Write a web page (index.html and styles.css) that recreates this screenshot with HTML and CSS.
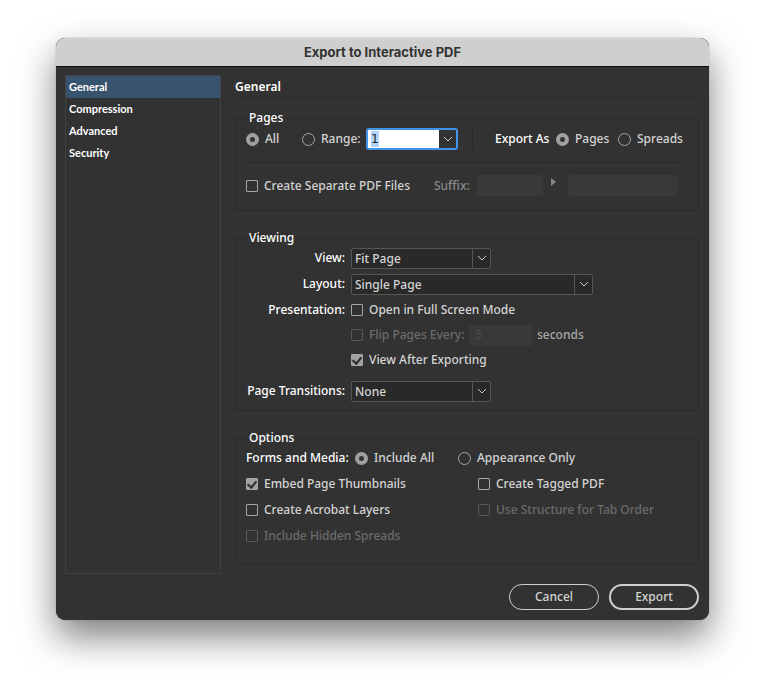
FILE: index.html
```
<!DOCTYPE html>
<html lang="en">

<head>
    <meta charset="utf-8">
    <title>Export to Interactive PDF</title>
    <link rel="stylesheet" href="styles.css">
</head>

<body>
    <form class="dialog" onsubmit="return false">
        <h1 class="titlebar">Export to Interactive PDF</h1>

        <div class="content">
            <nav class="sidebar">
                <a href="#general" class="active">General</a>
                <a href="#compression">Compression</a>
                <a href="#advanced">Advanced</a>
                <a href="#security">Security</a>
            </nav>

            <main id="general">
                <h2>General</h2>

                <fieldset class="pages">
                    <legend>Pages</legend>
                    <div class="row range-row">
                        <label class="all"><input type="radio" name="pages" checked>All</label>
                        <label class="range"><input type="radio" name="pages">Range:</label>
                        <div class="combo">
                            <input type="text" id="range" value="1" aria-label="Page range">
                            <button type="button" aria-label="Choose range"><svg viewBox="0 0 10 6"><path d="M1 1l4 4 4-4" /></svg></button>
                        </div>
                        <div class="export-as">
                            <span class="name">Export As</span>
                            <label class="as-pages"><input type="radio" name="as" checked>Pages</label>
                            <label><input type="radio" name="as">Spreads</label>
                        </div>
                    </div>
                    <div class="row suffix-row">
                        <label class="separate"><input type="checkbox">Create Separate PDF Files</label>
                        <label for="suffix" class="suffix-label">Suffix:</label>
                        <input type="text" id="suffix" class="field" disabled>
                        <svg class="arrow" viewBox="0 0 5 8"><path d="M0 0l5 4-5 4z" /></svg>
                        <input type="text" class="field preview" aria-label="Suffix preview" disabled>
                    </div>
                </fieldset>

                <fieldset class="viewing">
                    <legend>Viewing</legend>
                    <div class="grid">
                        <label for="view" class="name">View:</label>
                        <div class="select">
                            <select id="view"><option>Fit Page</option></select>
                            <svg viewBox="0 0 10 6"><path d="M1 1l4 4 4-4" /></svg>
                        </div>
                        <label for="layout" class="name">Layout:</label>
                        <div class="select wide">
                            <select id="layout"><option>Single Page</option></select>
                            <svg viewBox="0 0 10 6"><path d="M1 1l4 4 4-4" /></svg>
                        </div>
                        <span class="name">Presentation:</span>
                        <div class="stack">
                            <label><input type="checkbox">Open in Full Screen Mode</label>
                            <div class="row flip">
                                <label class="off"><input type="checkbox" disabled>Flip Pages Every:</label>
                                <input type="text" id="seconds" class="field" value="5" disabled>
                                <label for="seconds" class="seconds">seconds</label>
                            </div>
                            <label><input type="checkbox" checked>View After Exporting</label>
                        </div>
                        <label for="transitions" class="name">Page Transitions:</label>
                        <div class="select">
                            <select id="transitions"><option>None</option></select>
                            <svg viewBox="0 0 10 6"><path d="M1 1l4 4 4-4" /></svg>
                        </div>
                    </div>
                </fieldset>

                <fieldset class="options">
                    <legend>Options</legend>
                    <div class="row media">
                        <span class="name">Forms and Media:</span>
                        <label class="include"><input type="radio" name="media" checked>Include All</label>
                        <label><input type="radio" name="media">Appearance Only</label>
                    </div>
                    <div class="checks">
                        <label><input type="checkbox" checked>Embed Page Thumbnails</label>
                        <label><input type="checkbox">Create Tagged PDF</label>
                        <label><input type="checkbox">Create Acrobat Layers</label>
                        <label class="off"><input type="checkbox" disabled>Use Structure for Tab Order</label>
                        <label class="off"><input type="checkbox" disabled>Include Hidden Spreads</label>
                    </div>
                </fieldset>
            </main>
        </div>

        <footer>
            <button type="button">Cancel</button>
            <button type="submit" class="primary">Export</button>
        </footer>
    </form>

    <script>
        document.getElementById("range").select();
    </script>
</body>

</html>
```
FILE: styles.css
```
* {
    box-sizing: border-box;
}

body {
    margin: 0;
    padding: 38px 56px 74px;
    background: #fff;
    font-family: "Noto Sans", sans-serif;
    font-size: 12px;
    font-weight: 500;
    line-height: 16px;
    color: #d4d4d4;
}

input,
select,
button {
    margin: 0;
    font: inherit;
    color: inherit;
}

.dialog {
    position: relative;
    z-index: 0;
    border-radius: 9px;
    background: #323232;
    box-shadow: 0 0 1px 0 rgba(0, 0, 0, 0.6), 0 17px 36px 0 rgba(0, 0, 0, 0.5);
}

.titlebar {
    margin: 0;
    border-bottom: 1px solid #0c0c0c;
    border-radius: 9px 9px 0 0;
    background: #cfcfcf;
    color: #333;
    font-family: Inter, sans-serif;
    font-size: 13px;
    font-weight: 700;
    line-height: 28px;
    text-align: center;
}

.content {
    display: flex;
    gap: 14px;
    padding: 8px 10px 0 9px;
}

.sidebar {
    flex: none;
    width: 156px;
    border: 1px solid #414141;
}

.sidebar a {
    display: block;
    padding: 0 3px;
    color: #fff;
    font-family: Lato, sans-serif;
    font-size: 11px;
    font-weight: 700;
    line-height: 22px;
    text-decoration: none;
}

.sidebar .active {
    background: #38536e;
}

main {
    flex: 1;
    padding-bottom: 10px;
}

h2 {
    margin: 0 0 12px;
    padding-top: 2px;
    border-bottom: 1px solid #292929;
    color: #fff;
    font-size: 12px;
    font-weight: 600;
    line-height: 20px;
}

fieldset {
    min-width: 0;
    margin: 0 0 19px;
    padding: 0 10px;
    border: 1px solid #292929;
    border-radius: 2px;
}

fieldset:last-child {
    margin-bottom: 0;
}

legend {
    padding: 0 3px;
    color: #fff;
}

.name {
    color: #fff;
}

.row {
    display: flex;
    align-items: center;
}

label {
    display: flex;
    align-items: center;
    white-space: nowrap;
}

.off {
    color: #6b6b6b;
}

/* radios and tick boxes */
input[type="radio"],
input[type="checkbox"] {
    flex: none;
    appearance: none;
    width: 13px;
    height: 13px;
    margin-right: 6px;
    border: 1px solid #a6a6a6;
    border-radius: 50%;
}

input[type="radio"]:checked {
    border: 4px solid #a0a0a0;
}

input[type="checkbox"] {
    display: grid;
    place-items: center;
    width: 12px;
    height: 12px;
    border-radius: 1px;
}

input[type="checkbox"]:checked {
    background: #a0a0a0;
}

input[type="checkbox"]:checked::before {
    content: "";
    width: 4px;
    height: 7px;
    margin-bottom: 2px;
    border: solid #2b2b2b;
    border-width: 0 2px 2px 0;
    transform: rotate(40deg);
}

input[type="checkbox"]:disabled {
    border-color: #565656;
}

.field {
    width: 66px;
    height: 21px;
    padding: 0 6px;
    border: 0;
    border-radius: 2px;
    background: #393939;
    color: #4a4a4a;
}

svg {
    fill: none;
    stroke: #c8c8c8;
}

/* Pages */
.pages {
    padding-bottom: 14px;
}

.range-row {
    height: 26px;
}

.all {
    width: 56px;
}

.range {
    width: 64px;
}

.combo {
    display: flex;
    width: 92px;
    height: 22px;
    border: 2px solid #3f94ea;
    border-radius: 3px;
    background: #323232;
}

.combo input {
    flex: 1;
    min-width: 0;
    padding: 0 3px;
    border: 0;
    outline: 0;
    background: #fff;
    color: #222;
    font-family: "DejaVu Sans", sans-serif;
}

.combo input::selection {
    background: #b2d5fd;
    color: #222;
}

.combo button {
    display: grid;
    place-items: center;
    width: 17px;
    padding: 0;
    border: 0;
    background: none;
}

.combo svg {
    width: 10px;
    height: 6px;
}

.export-as {
    display: flex;
    align-items: center;
    margin-left: 14px;
    padding-left: 22px;
    border-left: 1px solid #292929;
    height: 24px;
}

.export-as .name {
    width: 61px;
    white-space: nowrap;
}

.as-pages {
    width: 62px;
}

.suffix-row {
    margin: 10px 8px 0 0;
    padding-top: 12px;
    border-top: 1px solid #292929;
}

.separate {
    width: 188px;
}

.suffix-label {
    width: 43px;
    color: #8a8a8a;
}

.arrow {
    width: 5px;
    height: 8px;
    margin: 0 12px 8px 8px;
    fill: #858585;
    stroke: none;
}

.preview {
    width: 110px;
}

/* Viewing */
.viewing {
    padding-bottom: 7px;
}

.grid {
    display: grid;
    grid-template-columns: 99px 1fr;
    gap: 2px 6px;
    line-height: 24px;
}

.grid > .name {
    justify-content: flex-end;
    text-align: right;
}

.select {
    display: grid;
    align-items: center;
    width: 140px;
    height: 24px;
}

.select.wide {
    width: 242px;
}

.select select,
.select svg {
    grid-area: 1 / 1;
}

.select select {
    appearance: none;
    width: 100%;
    height: 21px;
    padding: 0 20px 0 3px;
    border: 1px solid #565656;
    border-radius: 2px;
    background: linear-gradient(#565656, #565656) right 17px top / 1px 100% no-repeat #292929;
    line-height: 19px;
}

.select svg {
    justify-self: end;
    width: 10px;
    height: 6px;
    margin-right: 4px;
    pointer-events: none;
}

.stack {
    display: grid;
    gap: 1px;
    margin-bottom: 5px;
}

.flip {
    height: 24px;
}

.flip label:first-child {
    width: 118px;
}

.flip .field {
    width: 63px;
}

.seconds {
    margin-left: 5px;
    color: #a8a8a8;
}

/* Options */
.options {
    padding-bottom: 15px;
}

.media {
    height: 24px;
    margin-bottom: 2px;
}

.media .name {
    width: 109px;
    white-space: nowrap;
}

.include {
    width: 103px;
}

.checks {
    display: grid;
    grid-template-columns: 232px 1fr;
    gap: 2px 0;
    line-height: 24px;
}

footer {
    display: flex;
    justify-content: flex-end;
    gap: 10px;
    padding: 10px;
}

footer button {
    width: 90px;
    height: 26px;
    padding: 0;
    border: 1px solid #cfcfcf;
    border-radius: 13px;
    background: none;
}

footer .primary {
    border-width: 2px;
}
```
